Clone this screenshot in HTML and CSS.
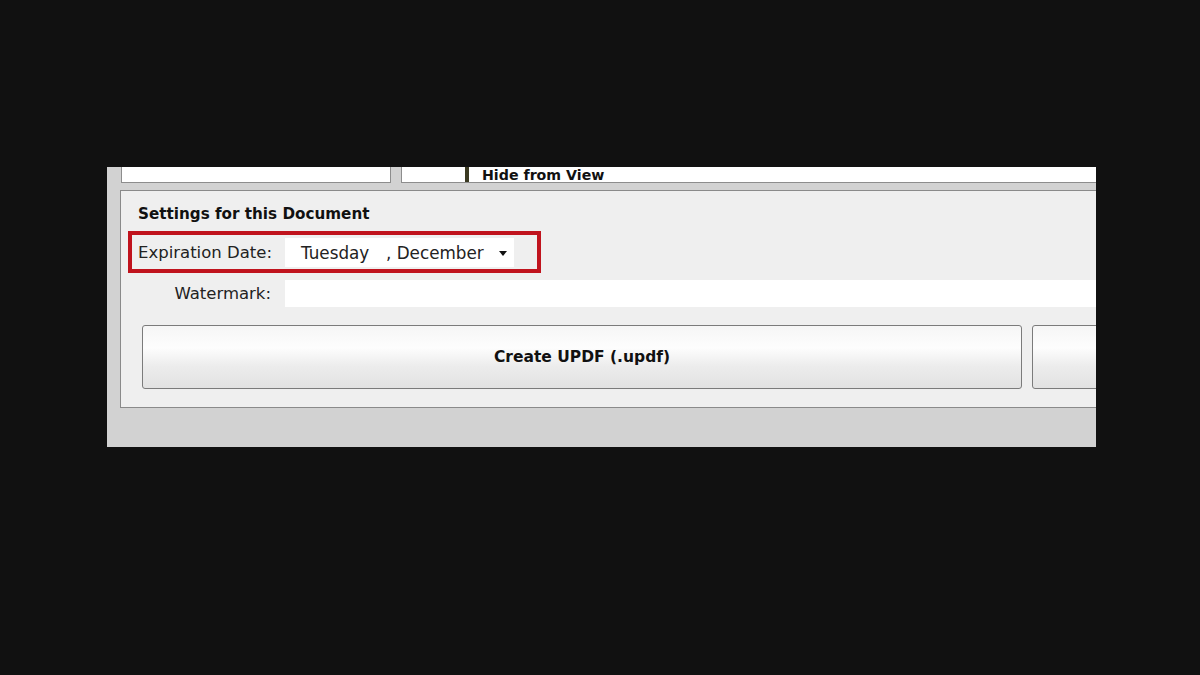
FILE: index.html
```html
<!DOCTYPE html>
<html>
<head>
<meta charset="utf-8">
<link rel="stylesheet" href="styles.css">
</head>
<body>
<div class="window">
  <div class="toprow">
    <div class="box box-left"></div>
    <div class="box box-right">
      <div class="cell"></div>
      <div class="bar"></div>
      <div class="hide">Hide from View</div>
    </div>
  </div>
  <div class="group">
    <div class="title">Settings for this Document</div>
    <div class="highlight">
      <div class="label">Expiration Date:</div>
      <div class="select">
        <span class="day">Tuesday</span>
        <span class="month">, December</span>
        <span class="arrow"></span>
      </div>
    </div>
    <div class="row">
      <div class="label right">Watermark:</div>
      <div class="input"></div>
    </div>
    <div class="buttons">
      <div class="btn main">Create UPDF (.updf)</div>
      <div class="btn second"></div>
    </div>
  </div>
</div>
</body>
</html>
```

FILE: styles.css
```css
html, body {
  margin: 0;
  padding: 0;
  background: #111111;
  width: 1200px;
  height: 675px;
  overflow: hidden;
  font-family: "DejaVu Sans", Verdana, sans-serif;
  color: #222;
}

.window {
  margin-left: 107px;
  margin-top: 167px;
  width: 989px;
  height: 280px;
  background: #d2d2d2;
  overflow: hidden;
  box-sizing: border-box;
}

.toprow {
  display: flex;
  gap: 10px;
  margin-top: -10px;
  padding-left: 14px;
  height: 26px;
}

.box {
  background: #fff;
  border: 1px solid #8d8d8d;
  height: 24px;
  box-sizing: content-box;
  flex: none;
}

.box-left {
  width: 268px;
}

.box-right {
  width: 720px;
  display: flex;
  align-items: stretch;
}

.cell {
  width: 63px;
  flex: none;
}

.bar {
  width: 4px;
  background: #3b3a22;
  flex: none;
}

.hide {
  padding-left: 13px;
  padding-top: 10px;
  font-weight: bold;
  font-size: 14.2px;
  line-height: 14px;
  color: #111;
}

.group {
  margin-top: 7px;
  margin-left: 13px;
  width: 1000px;
  height: 218px;
  background: #efefef;
  border: 1px solid #8a8a8a;
  box-sizing: border-box;
  display: flex;
  flex-direction: column;
}

.title {
  margin-top: 13px;
  padding-left: 17px;
  font-weight: bold;
  font-size: 15.2px;
  line-height: 20px;
  color: #111;
}

.highlight {
  margin-top: 7px;
  margin-left: 7px;
  width: 413px;
  height: 42px;
  box-sizing: border-box;
  border: 4px solid #c0131d;
  display: flex;
  align-items: center;
  padding-left: 6px;
  gap: 14px;
}

.label {
  width: 133px;
  font-size: 16.5px;
  color: #222;
  flex: none;
  white-space: nowrap;
}

.label.right {
  text-align: right;
}

.select {
  width: 229px;
  height: 29px;
  background: #fff;
  margin-top: 1px;
  display: flex;
  align-items: center;
  font-size: 16.8px;
  color: #222;
  position: relative;
  flex: none;
}

.day {
  padding-left: 16px;
  width: 85px;
  flex: none;
}

.month {
  flex: none;
}

.arrow {
  position: absolute;
  left: 214px;
  top: 13px;
  width: 0;
  height: 0;
  border-left: 4px solid transparent;
  border-right: 4px solid transparent;
  border-top: 5px solid #111;
}

.row {
  display: flex;
  align-items: center;
  gap: 14px;
  margin-top: 7px;
  padding-left: 17px;
}

.input {
  width: 820px;
  height: 27px;
  background: #fff;
  flex: none;
}

.buttons {
  display: flex;
  gap: 10px;
  margin-top: 18px;
  padding-left: 21px;
}

.btn {
  height: 64px;
  box-sizing: border-box;
  border: 1px solid #7b7b7b;
  border-radius: 3px;
  background: linear-gradient(to bottom, #f6f6f6 0%, #fdfdfd 35%, #ececec 65%, #e2e2e2 100%);
  display: flex;
  align-items: center;
  justify-content: center;
  font-weight: bold;
  font-size: 15.5px;
  color: #111;
  flex: none;
}

.btn.main {
  width: 880px;
}

.btn.second {
  width: 200px;
}
```
